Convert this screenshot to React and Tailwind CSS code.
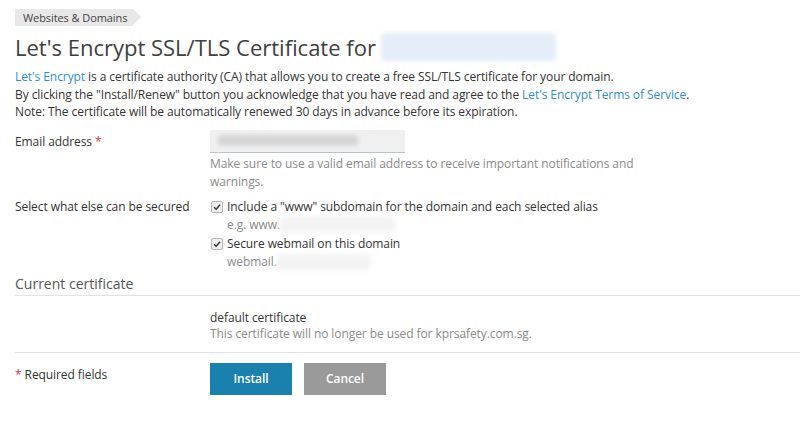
import React from 'react';

const Blur = ({ className }) => (
  <span className={`inline-block align-middle rounded-sm blur-[2px] ${className}`} />
);

const Check = () => (
  <span className="mt-[3px] flex h-[12px] w-[12px] shrink-0 items-center justify-center rounded-[2px] border border-[#b5b5b5] bg-[#eeeeee]">
    <svg viewBox="0 0 12 12" className="h-[10px] w-[10px]">
      <path d="M2.5 6.2 L5 8.6 L9.6 3.2" fill="none" stroke="#333" strokeWidth="1.7" />
    </svg>
  </span>
);

export default function App() {
  return (
    <div className="min-h-screen bg-white pl-[15px] pt-[9px] text-[12px] leading-[18px] tracking-[-0.08px] text-[#333]" style={{ fontFamily: '"Open Sans", sans-serif' }}>
      <div className="flex">
        <div className="relative flex h-[17px] items-center bg-[#e8e8e8] pl-[8px] pr-[6px] text-[11px] text-[#444]">
          Websites &amp; Domains
          <span className="absolute right-[-8px] top-0 h-0 w-0 border-y-[8.5px] border-l-[8px] border-y-transparent border-l-[#e8e8e8]" />
        </div>
      </div>

      <h1 className="mt-[6px] flex items-center text-[22px] leading-[30px] tracking-normal text-[#404040]">
        Let's Encrypt SSL/TLS Certificate for
        <Blur className="ml-[5px] h-[28px] w-[175px] bg-[#e4edf8]" />
      </h1>

      <div className="mt-[6px] leading-[17.5px]">
        <p><span className="text-[#2f8cd1]">Let's Encrypt</span> is a certificate authority (CA) that allows you to create a free SSL/TLS certificate for your domain.</p>
        <p>By clicking the "Install/Renew" button you acknowledge that you have read and agree to the <span className="text-[#2f8cd1]">Let's Encrypt Terms of Service</span>.</p>
        <p>Note: The certificate will be automatically renewed 30 days in advance before its expiration.</p>
      </div>

      <div className="mt-[9px] flex">
        <div className="w-[195px] shrink-0 pt-[3px]">
          Email address <span className="text-[#d02e4a]">*</span>
        </div>
        <div>
          <div className="flex h-[23px] w-[195px] items-center border-b border-[#b9c3cc] bg-[#f0f0f0] px-[8px]">
            <Blur className="h-[11px] w-[140px] bg-[#d6d6d6]" />
          </div>
          <p className="mt-[2px] w-[440px] text-[#8a8a8a]">Make sure to use a valid email address to receive important notifications and warnings.</p>
        </div>
      </div>

      <div className="mt-[7px] flex">
        <div className="w-[195px] shrink-0">Select what else can be secured</div>
        <div className="pl-[1px]">
          <div className="flex gap-[4px]">
            <Check />
            <div>
              <div>Include a "www" subdomain for the domain and each selected alias</div>
              <div className="flex items-center text-[#8a8a8a]">e.g. www.<Blur className="h-[16px] w-[116px] bg-[#f4f4f4]" /></div>
            </div>
          </div>
          <div className="mt-[1px] flex gap-[4px]">
            <Check />
            <div>
              <div>Secure webmail on this domain</div>
              <div className="flex items-center text-[#8a8a8a]">webmail.<Blur className="h-[16px] w-[94px] bg-[#f4f4f4]" /></div>
            </div>
          </div>
        </div>
      </div>

      <div className="mt-[3px] border-b border-[#e2e2e2] pb-[1px] text-[14px] leading-[20px] tracking-normal text-[#555]">
        Current certificate
      </div>

      <div className="border-b border-[#e2e2e2] pb-[9px] pl-[195px] pt-[14px] leading-[16.5px]">
        <div>default certificate</div>
        <div className="text-[#8a8a8a]">This certificate will no longer be used for kprsafety.com.sg.</div>
      </div>

      <div className="mt-[10px] flex">
        <div className="w-[195px] shrink-0 pt-[3px]">
          <span className="text-[#d02e4a]">*</span> Required fields
        </div>
        <div className="flex gap-[12px]">
          <button className="h-[32px] w-[82px] bg-[#1a80ad] text-[12px] font-semibold text-white">Install</button>
          <button className="h-[32px] w-[82px] bg-[#9a9a9a] text-[12px] font-semibold text-white">Cancel</button>
        </div>
      </div>
    </div>
  );
}
